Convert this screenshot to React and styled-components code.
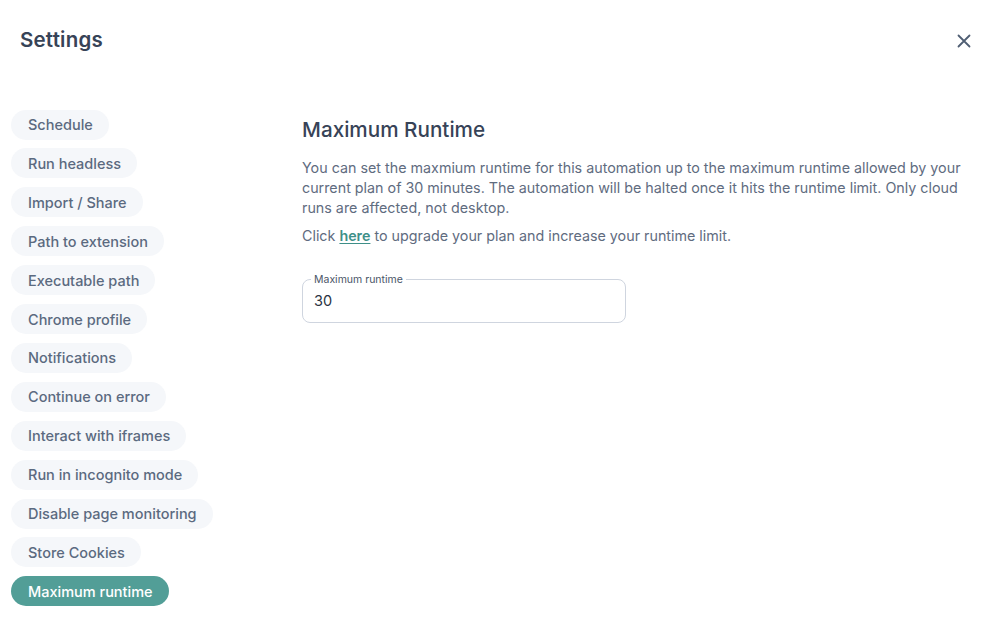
import React from "react";
import styled, { createGlobalStyle } from "styled-components";

const Global = createGlobalStyle`
  html, body { margin: 0; padding: 0; background: #ffffff; }
  body { font-family: "Inter", "Noto Sans", sans-serif; }
  * { box-sizing: border-box; }
`;

const Page = styled.div`
  width: 1000px;
  height: 621px;
  background: #fff;
  display: flex;
  flex-direction: column;
  overflow: hidden;
`;

const Header = styled.div`
  display: flex;
  align-items: flex-start;
  justify-content: space-between;
  padding: 27px 28px 0 20px;
  height: 80px;
`;

const Title = styled.h1`
  margin: 0;
  font-size: 20.5px;
  font-weight: 600;
  color: #374357;
  line-height: 26px;
  letter-spacing: 0.2px;
`;

const CloseButton = styled.button`
  border: 0;
  background: transparent;
  padding: 0;
  margin-top: 6px;
  width: 16px;
  height: 16px;
  display: flex;
  align-items: center;
  justify-content: center;
  cursor: pointer;
`;

const Body = styled.div`
  display: grid;
  grid-template-columns: 302px 1fr;
  padding-top: 29.6px;
`;

const Sidebar = styled.nav`
  display: flex;
  flex-direction: column;
  align-items: flex-start;
  gap: 8.9px;
  padding-left: 11px;
`;

const Pill = styled.button`
  border: 0;
  height: 30px;
  padding: 0 16px 0 17px;
  border-radius: 15px;
  font-family: inherit;
  font-size: 14.5px;
  font-weight: 500;
  background: ${(p) => (p.$active ? "#529e97" : "#f5f7fa")};
  color: ${(p) => (p.$active ? "#ffffff" : "#5b6a80")};
  cursor: pointer;
  white-space: nowrap;
`;

const Content = styled.section`
  padding-right: 30px;
`;

const Heading = styled.h2`
  margin: 7.4px 0 0 0;
  font-size: 20.7px;
  font-weight: 500;
  color: #374357;
  line-height: 26px;
`;

const Paragraph = styled.p`
  margin: 15px 0 0 0;
  font-size: 14.3px;
  line-height: 20px;
  color: #5f6c7f;
  max-width: 665px;
`;

const SmallParagraph = styled(Paragraph)`
  margin-top: 8px;
`;

const Link = styled.a`
  color: #3e8f88;
  font-weight: 600;
  text-decoration: underline;
  text-underline-offset: 2px;
`;

const Field = styled.fieldset`
  margin: 28px 0 0 0;
  width: 324px;
  height: 49px;
  border: 1px solid #cfd5df;
  border-radius: 8px;
  padding: 0 11px;
`;

const Legend = styled.legend`
  font-size: 10.5px;
  color: #4a5568;
  padding: 0 3px;
  margin-left: -3px;
  line-height: 12px;
`;

const Input = styled.input`
  border: 0;
  outline: none;
  font-family: inherit;
  font-size: 14.5px;
  color: #2a3442;
  width: 100%;
  padding: 0;
  margin-top: 6px;
  background: transparent;
`;

const items = [
  "Schedule",
  "Run headless",
  "Import / Share",
  "Path to extension",
  "Executable path",
  "Chrome profile",
  "Notifications",
  "Continue on error",
  "Interact with iframes",
  "Run in incognito mode",
  "Disable page monitoring",
  "Store Cookies",
  "Maximum runtime",
];

export default function App() {
  return (
    <Page>
      <Global />
      <Header>
        <Title>Settings</Title>
        <CloseButton aria-label="Close">
          <svg width="14" height="14" viewBox="0 0 14 14">
            <path d="M1.5 1.5 L12.5 12.5 M12.5 1.5 L1.5 12.5" stroke="#4f5e73" strokeWidth="1.8" strokeLinecap="round" />
          </svg>
        </CloseButton>
      </Header>
      <Body>
        <Sidebar>
          {items.map((it) => (
            <Pill key={it} $active={it === "Maximum runtime"}>
              {it}
            </Pill>
          ))}
        </Sidebar>
        <Content>
          <Heading>Maximum Runtime</Heading>
          <Paragraph>
            You can set the maxmium runtime for this automation up to the maximum runtime allowed by your
            current plan of 30 minutes. The automation will be halted once it hits the runtime limit. Only cloud
            runs are affected, not desktop.
          </Paragraph>
          <SmallParagraph>
            Click <Link href="#">here</Link> to upgrade your plan and increase your runtime limit.
          </SmallParagraph>
          <Field>
            <Legend>Maximum runtime</Legend>
            <Input defaultValue="30" />
          </Field>
        </Content>
      </Body>
    </Page>
  );
}
